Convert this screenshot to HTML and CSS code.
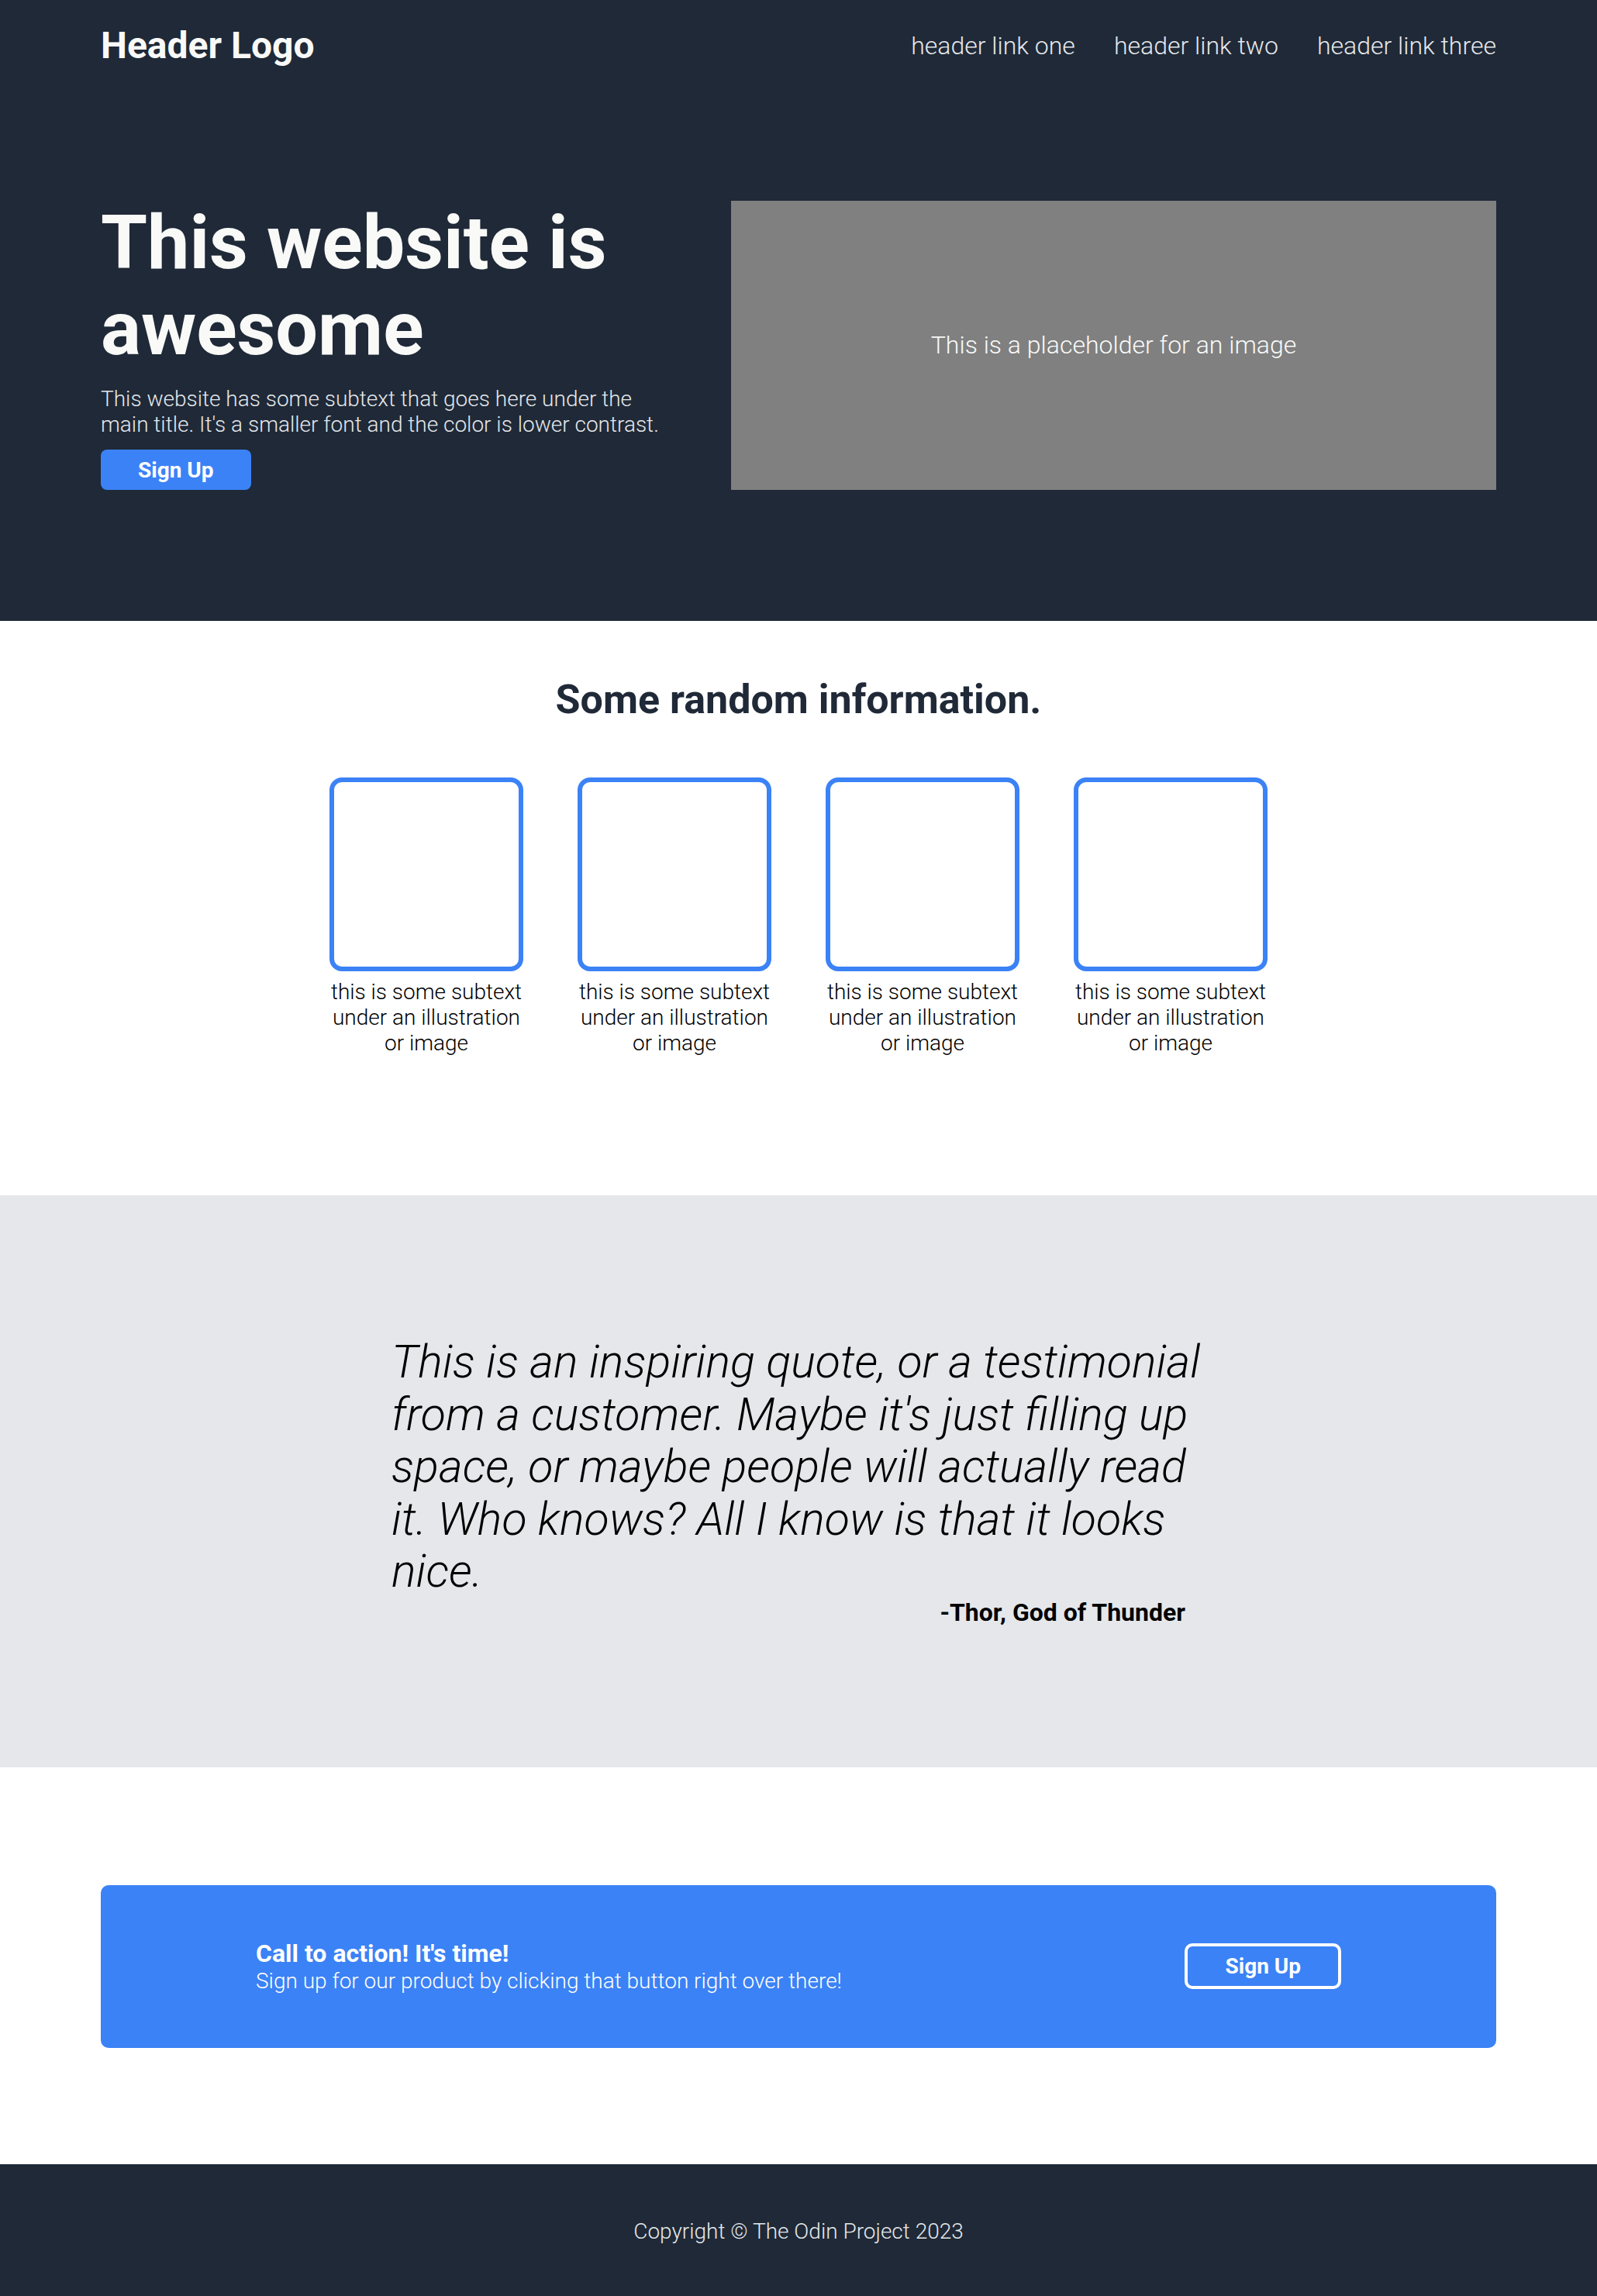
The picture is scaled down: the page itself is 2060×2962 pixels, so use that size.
FILE: index.html
```html
<!DOCTYPE html>
<html lang="en">
<head>
<meta charset="utf-8">
<title>Landing Page</title>
<link rel="stylesheet" href="styles.css">
</head>
<body>
<header class="top">
  <nav class="nav container">
    <div class="logo">Header Logo</div>
    <ul class="links">
      <li><a href="#">header link one</a></li>
      <li><a href="#">header link two</a></li>
      <li><a href="#">header link three</a></li>
    </ul>
  </nav>
  <section class="hero container">
    <div class="hero-text">
      <h1 class="hero-title">This website is awesome</h1>
      <p class="hero-sub">This website has some subtext that goes here under the main title. It's a smaller font and the color is lower contrast.</p>
      <button class="btn btn-solid">Sign Up</button>
    </div>
    <div class="hero-image">This is a placeholder for an image</div>
  </section>
</header>

<main>
  <section class="info">
    <h2 class="info-title">Some random information.</h2>
    <div class="cards">
      <div class="card"><div class="card-img"></div><p class="card-text">this is some subtext under an illustration or image</p></div>
      <div class="card"><div class="card-img"></div><p class="card-text">this is some subtext under an illustration or image</p></div>
      <div class="card"><div class="card-img"></div><p class="card-text">this is some subtext under an illustration or image</p></div>
      <div class="card"><div class="card-img"></div><p class="card-text">this is some subtext under an illustration or image</p></div>
    </div>
  </section>

  <section class="quote-section">
    <div class="quote-box">
      <p class="quote">This is an inspiring quote, or a testimonial from a customer. Maybe it's just filling up space, or maybe people will actually read it. Who knows? All I know is that it looks nice.</p>
      <p class="author">-Thor, God of Thunder</p>
    </div>
  </section>

  <section class="cta-section">
    <div class="cta container">
      <div class="cta-text">
        <h3 class="cta-title">Call to action! It's time!</h3>
        <p class="cta-sub">Sign up for our product by clicking that button right over there!</p>
      </div>
      <button class="btn btn-outline">Sign Up</button>
    </div>
  </section>
</main>

<footer class="footer">Copyright © The Odin Project 2023</footer>
</body>
</html>
```

FILE: styles.css
```css
* { box-sizing: border-box; }

body {
  margin: 0;
  font-family: Roboto, "Liberation Sans", sans-serif;
  font-weight: 300;
  color: #000;
  background: #fff;
}

.container {
  width: 1800px;
  margin: 0 auto;
}

.top {
  background: #1f2937;
}

.nav {
  display: flex;
  justify-content: space-between;
  align-items: center;
  padding-top: 30px;
}

.logo {
  font-size: 48px;
  font-weight: 700;
  color: #f9faf8;
}

.links {
  display: flex;
  gap: 50px;
  list-style: none;
  margin: 0;
  padding: 0;
}

.links a {
  color: #e5e7eb;
  text-decoration: none;
  font-size: 32px;
  font-weight: 300;
}

.hero {
  display: flex;
  align-items: center;
  gap: 70px;
  padding: 171px 0 169px;
}

.hero-text {
  flex: 0 0 743px;
}

.hero-title {
  margin: 0;
  font-size: 97px;
  line-height: 111px;
  font-weight: 700;
  color: #f9faf8;
}

.hero-sub {
  margin: 18px 0 16px;
  font-size: 28px;
  color: #e5e7eb;
}

.btn {
  font-family: inherit;
  font-size: 28px;
  font-weight: 700;
  color: #fff;
  line-height: normal;
  cursor: pointer;
}

.btn-solid {
  background: #3b82f6;
  border: none;
  border-radius: 8px;
  padding: 9.5px 48px;
}

.hero-image {
  flex: 1;
  height: 373px;
  background: #808080;
  color: #f9faf8;
  font-size: 32px;
  display: flex;
  align-items: center;
  justify-content: center;
}

.info {
  padding: 71px 0 180px;
}

.info-title {
  margin: 0 0 70px;
  text-align: center;
  font-size: 52px;
  font-weight: 700;
  color: #1f2937;
}

.cards {
  display: flex;
  justify-content: center;
  gap: 70px;
}

.card {
  width: 250px;
}

.card-img {
  width: 250px;
  height: 250px;
  border: 6px solid #3b82f6;
  border-radius: 16px;
}

.card-text {
  margin: 10px 0 0;
  text-align: center;
  font-size: 28px;
}

.quote-section {
  background: #e5e7eb;
  padding: 181px 0 181px;
}

.quote-box {
  width: 1050px;
  margin: 0 auto;
}

.quote {
  margin: 0;
  font-size: 59.2px;
  line-height: 67.5px;
  font-style: italic;
  font-weight: 300;
}

.author {
  margin: 0;
  padding-right: 26px;
  text-align: right;
  font-size: 32px;
  font-weight: 700;
}

.cta-section {
  padding: 152px 0 150px;
}

.cta {
  background: #3b82f6;
  border-radius: 10px;
  height: 210px;
  padding: 0 200px;
  display: flex;
  justify-content: space-between;
  align-items: center;
  color: #fff;
}

.cta-title {
  margin: 0;
  font-size: 32px;
  font-weight: 700;
}

.cta-sub {
  margin: 0;
  font-size: 28px;
}

.btn-outline {
  background: transparent;
  border: 4px solid #fff;
  border-radius: 10px;
  padding: 9px 48px;
}

.footer {
  background: #1f2937;
  color: #e5e7eb;
  text-align: center;
  font-size: 28px;
  padding: 70px 0;
}
```
